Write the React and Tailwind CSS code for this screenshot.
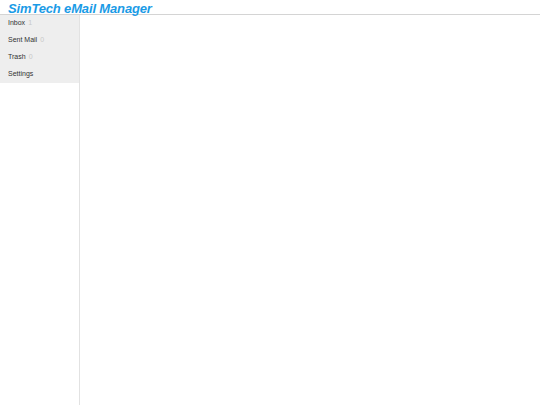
export default function App() {
  const items = [
    { label: "Inbox", count: "1" },
    { label: "Sent Mail", count: "0" },
    { label: "Trash", count: "0" },
    { label: "Settings", count: null },
  ];
  return (
    <div className="w-[540px] h-[405px] bg-white flex flex-col" style={{ fontFamily: '"Liberation Sans", Arial, sans-serif' }}>
      <div className="h-[14px] border-b border-[#d4d4d4] box-content flex items-end">
        <h1 className="ml-[8px] text-[13px] leading-[13px] font-bold italic tracking-[-0.15px] text-[#1a9be6] -mb-[1px]">SimTech eMail Manager</h1>
      </div>
      <div className="flex flex-1">
        <div className="w-[80px] border-r border-[#e2e2e2] flex flex-col">
          <div className="bg-[#eeeeee] flex flex-col">
            {items.map((it) => (
              <div key={it.label} className="h-[17px] pl-[8px] flex items-center text-[7px] text-[#333]">
                <span>{it.label}</span>
                {it.count !== null && <span className="ml-[3px] text-[#c8c8c8]">{it.count}</span>}
              </div>
            ))}
          </div>
        </div>
        <div className="flex-1" />
      </div>
    </div>
  );
}
